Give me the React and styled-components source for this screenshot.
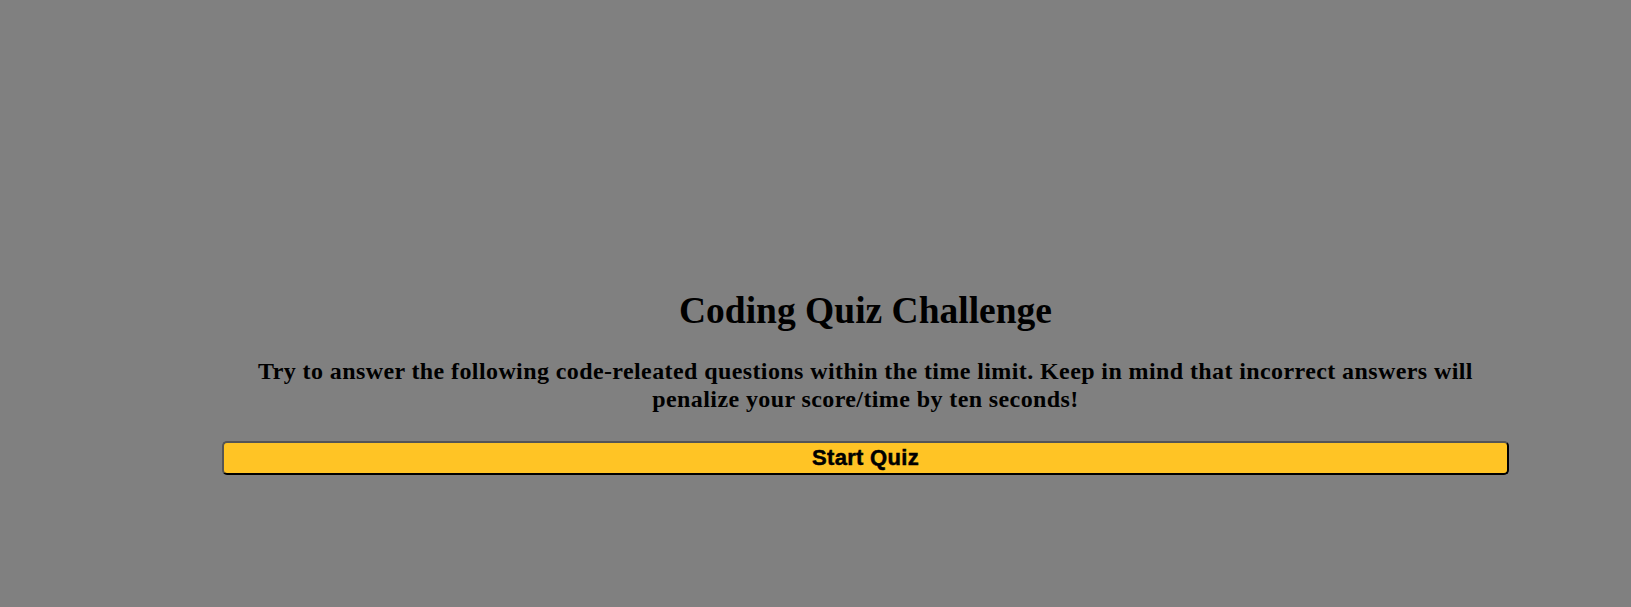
import React from 'react';
import styled, { createGlobalStyle } from 'styled-components';

const GlobalStyle = createGlobalStyle`
    body {
        margin: 0;
        background: #808080;
        font-family: "Liberation Serif", "Times New Roman", serif;
    }
`

const Page = styled.main`
    min-height: 607px;
    padding: 289px 0 0 100px;
    box-sizing: border-box;
`

const Card = styled.section`
    width: 84%;
    margin: 0 auto;
    display: flex;
    flex-direction: column;
    align-items: center;
    text-align: center;
`

const Title = styled.h1`
    margin: 0;
    font-size: 37.5px;
    font-weight: bold;
    color: #000;
`

const Intro = styled.p`
    margin: 25px 0 0;
    font-size: 24px;
    line-height: 28px;
    letter-spacing: 0.4px;
    font-weight: bold;
    color: #000;
`

const StartButton = styled.button`
    margin-top: 28px;
    width: 100%;
    height: 34px;
    padding: 0;
    background: #ffc425;
    border-style: solid;
    border-width: 2px;
    border-color: #555 #000 #000 #555;
    border-radius: 5px;
    font-family: "Liberation Sans", Arial, sans-serif;
    font-size: 22px;
    font-weight: bold;
    letter-spacing: 0.3px;
    -webkit-text-stroke: 0.5px #000;
    color: #000;
    cursor: pointer;
`

export default function App() {
    return (
        <>
            <GlobalStyle />
            <Page>
                <Card>
                    <Title>Coding Quiz Challenge</Title>
                    <Intro>
                        Try to answer the following code-releated questions within the time limit. Keep in mind that incorrect answers will penalize your score/time by ten seconds!
                    </Intro>
                    <StartButton>Start Quiz</StartButton>
                </Card>
            </Page>
        </>
    );
}
